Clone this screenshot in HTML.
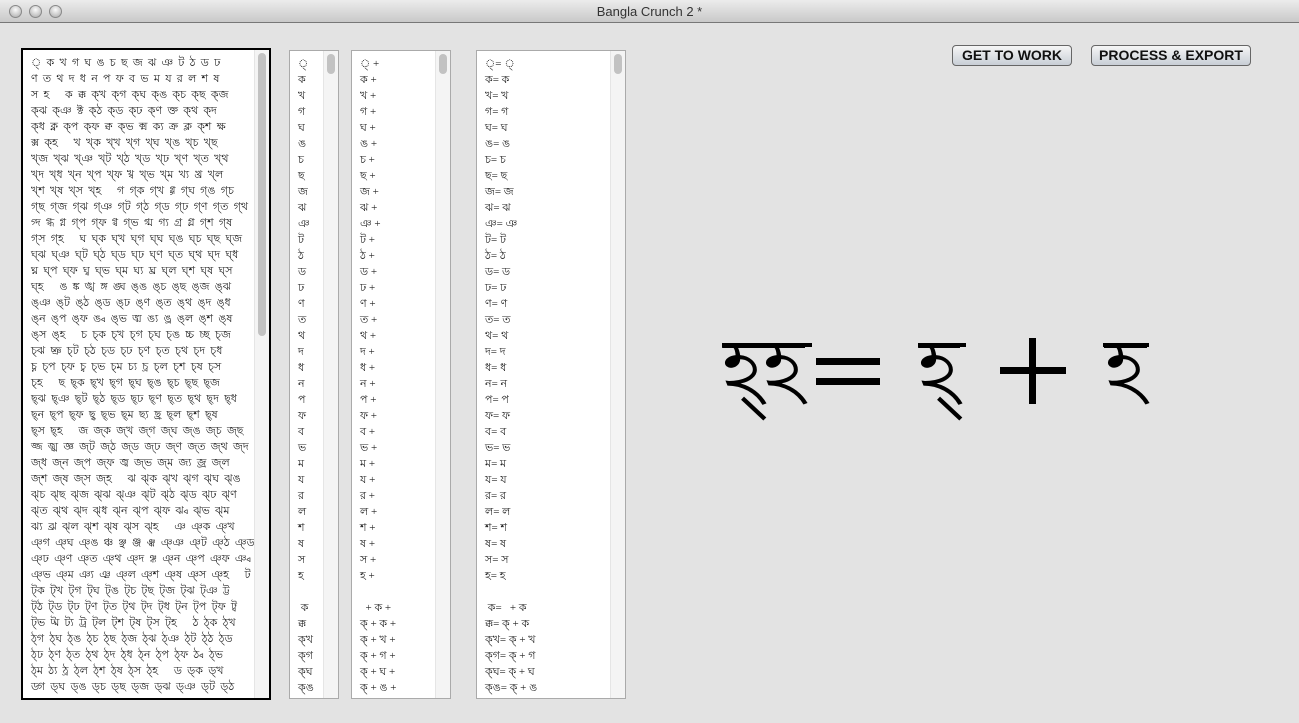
<!DOCTYPE html>
<html><head><meta charset="utf-8"><style>
*{margin:0;padding:0;box-sizing:border-box}
body{width:1299px;height:723px;background:#e3e3e3;font-family:"Liberation Sans","Noto Sans CJK SC",sans-serif;overflow:hidden;position:relative}
.tb{position:absolute;left:0;top:0;width:1299px;height:23px;background:linear-gradient(#ececec,#c9c9c9);border-bottom:1px solid #777;text-align:center;font-size:13px;line-height:23px;color:#333}
.dot{position:absolute;top:5px;width:13px;height:13px;border-radius:50%;background:radial-gradient(circle at 50% 35%,#fafafa,#a8a8a8);border:1px solid #888}
.p{position:absolute;top:50px;height:649px;background:#fff;border:1px solid #aaa;overflow:hidden;font-size:11px;line-height:16px;color:#222;padding:5px 0 0 8px;white-space:pre;font-family:"Liberation Serif","Noto Sans CJK SC",serif}
.p1{word-spacing:2.5px}
.sb{position:absolute;top:0;right:0;width:15px;height:100%;background:#f4f4f4;border-left:1px solid #e5e5e5}
.th{position:absolute;left:3px;top:3px;width:8px;height:20px;border-radius:4px;background:#c2c2c2}
.btn{position:absolute;top:45px;height:21px;border:1px solid #666;border-radius:4px;background:linear-gradient(#f6f6f6,#c8ced6);font-weight:bold;font-size:14px;line-height:19px;text-align:center;color:#111}
.b{position:absolute;top:318px;font-size:78px;line-height:100px;white-space:nowrap;font-family:"Liberation Sans","Noto Sans CJK SC",sans-serif}
.bar{position:absolute;top:343px;height:4px;background:#000}
.sym{position:absolute;background:#000}
</style></head><body>
<div class="tb">Bangla Crunch 2 *
<div class="dot" style="left:9px"></div><div class="dot" style="left:29px"></div><div class="dot" style="left:49px"></div></div>

<div class="p p1" style="left:21px;top:48px;width:250px;height:652px;border:2px solid #000">্ ক খ গ ঘ ঙ চ ছ জ ঝ ঞ ট ঠ ড ঢ
ণ ত থ দ ধ ন প ফ ব ভ ম য র ল শ ষ
স হ   ক ক্ক ক্খ ক্গ ক্ঘ ক্ঙ ক্চ ক্ছ ক্জ
ক্ঝ ক্ঞ ক্ট ক্ঠ ক্ড ক্ঢ ক্ণ ক্ত ক্থ ক্দ
ক্ধ ক্ন ক্প ক্ফ ক্ব ক্ভ ক্ম ক্য ক্র ক্ল ক্শ ক্ষ
ক্স ক্হ   খ খ্ক খ্খ খ্গ খ্ঘ খ্ঙ খ্চ খ্ছ
খ্জ খ্ঝ খ্ঞ খ্ট খ্ঠ খ্ড খ্ঢ খ্ণ খ্ত খ্থ
খ্দ খ্ধ খ্ন খ্প খ্ফ খ্ব খ্ভ খ্ম খ্য খ্র খ্ল
খ্শ খ্ষ খ্স খ্হ   গ গ্ক গ্খ গ্গ গ্ঘ গ্ঙ গ্চ
গ্ছ গ্জ গ্ঝ গ্ঞ গ্ট গ্ঠ গ্ড গ্ঢ গ্ণ গ্ত গ্থ
গ্দ গ্ধ গ্ন গ্প গ্ফ গ্ব গ্ভ গ্ম গ্য গ্র গ্ল গ্শ গ্ষ
গ্স গ্হ   ঘ ঘ্ক ঘ্খ ঘ্গ ঘ্ঘ ঘ্ঙ ঘ্চ ঘ্ছ ঘ্জ
ঘ্ঝ ঘ্ঞ ঘ্ট ঘ্ঠ ঘ্ড ঘ্ঢ ঘ্ণ ঘ্ত ঘ্থ ঘ্দ ঘ্ধ
ঘ্ন ঘ্প ঘ্ফ ঘ্ব ঘ্ভ ঘ্ম ঘ্য ঘ্র ঘ্ল ঘ্শ ঘ্ষ ঘ্স
ঘ্হ   ঙ ঙ্ক ঙ্খ ঙ্গ ঙ্ঘ ঙ্ঙ ঙ্চ ঙ্ছ ঙ্জ ঙ্ঝ
ঙ্ঞ ঙ্ট ঙ্ঠ ঙ্ড ঙ্ঢ ঙ্ণ ঙ্ত ঙ্থ ঙ্দ ঙ্ধ
ঙ্ন ঙ্প ঙ্ফ ঙ্ব ঙ্ভ ঙ্ম ঙ্য ঙ্র ঙ্ল ঙ্শ ঙ্ষ
ঙ্স ঙ্হ   চ চ্ক চ্খ চ্গ চ্ঘ চ্ঙ চ্চ চ্ছ চ্জ
চ্ঝ চ্ঞ চ্ট চ্ঠ চ্ড চ্ঢ চ্ণ চ্ত চ্থ চ্দ চ্ধ
চ্ন চ্প চ্ফ চ্ব চ্ভ চ্ম চ্য চ্র চ্ল চ্শ চ্ষ চ্স
চ্হ   ছ ছ্ক ছ্খ ছ্গ ছ্ঘ ছ্ঙ ছ্চ ছ্ছ ছ্জ
ছ্ঝ ছ্ঞ ছ্ট ছ্ঠ ছ্ড ছ্ঢ ছ্ণ ছ্ত ছ্থ ছ্দ ছ্ধ
ছ্ন ছ্প ছ্ফ ছ্ব ছ্ভ ছ্ম ছ্য ছ্র ছ্ল ছ্শ ছ্ষ
ছ্স ছ্হ   জ জ্ক জ্খ জ্গ জ্ঘ জ্ঙ জ্চ জ্ছ
জ্জ জ্ঝ জ্ঞ জ্ট জ্ঠ জ্ড জ্ঢ জ্ণ জ্ত জ্থ জ্দ
জ্ধ জ্ন জ্প জ্ফ জ্ব জ্ভ জ্ম জ্য জ্র জ্ল
জ্শ জ্ষ জ্স জ্হ   ঝ ঝ্ক ঝ্খ ঝ্গ ঝ্ঘ ঝ্ঙ
ঝ্চ ঝ্ছ ঝ্জ ঝ্ঝ ঝ্ঞ ঝ্ট ঝ্ঠ ঝ্ড ঝ্ঢ ঝ্ণ
ঝ্ত ঝ্থ ঝ্দ ঝ্ধ ঝ্ন ঝ্প ঝ্ফ ঝ্ব ঝ্ভ ঝ্ম
ঝ্য ঝ্র ঝ্ল ঝ্শ ঝ্ষ ঝ্স ঝ্হ   ঞ ঞ্ক ঞ্খ
ঞ্গ ঞ্ঘ ঞ্ঙ ঞ্চ ঞ্ছ ঞ্জ ঞ্ঝ ঞ্ঞ ঞ্ট ঞ্ঠ ঞ্ড
ঞ্ঢ ঞ্ণ ঞ্ত ঞ্থ ঞ্দ ঞ্ধ ঞ্ন ঞ্প ঞ্ফ ঞ্ব
ঞ্ভ ঞ্ম ঞ্য ঞ্র ঞ্ল ঞ্শ ঞ্ষ ঞ্স ঞ্হ   ট
ট্ক ট্খ ট্গ ট্ঘ ট্ঙ ট্চ ট্ছ ট্জ ট্ঝ ট্ঞ ট্ট
ট্ঠ ট্ড ট্ঢ ট্ণ ট্ত ট্থ ট্দ ট্ধ ট্ন ট্প ট্ফ ট্ব
ট্ভ ট্ম ট্য ট্র ট্ল ট্শ ট্ষ ট্স ট্হ   ঠ ঠ্ক ঠ্খ
ঠ্গ ঠ্ঘ ঠ্ঙ ঠ্চ ঠ্ছ ঠ্জ ঠ্ঝ ঠ্ঞ ঠ্ট ঠ্ঠ ঠ্ড
ঠ্ঢ ঠ্ণ ঠ্ত ঠ্থ ঠ্দ ঠ্ধ ঠ্ন ঠ্প ঠ্ফ ঠ্ব ঠ্ভ
ঠ্ম ঠ্য ঠ্র ঠ্ল ঠ্শ ঠ্ষ ঠ্স ঠ্হ   ড ড্ক ড্খ
ড্গ ড্ঘ ড্ঙ ড্চ ড্ছ ড্জ ড্ঝ ড্ঞ ড্ট ড্ঠ
ড্ড ড্ঢ ড্ণ ড্ত ড্থ ড্দ ড্ধ ড্ন ড্প ড্ফ ড্ব
ড্ভ ড্ম ড্য ড্র ড্ল ড্শ ড্ষ ড্স ড্হ   ঢ ঢ্ক
ঢ্খ ঢ্গ ঢ্ঘ ঢ্ঙ ঢ্চ ঢ্ছ ঢ্জ ঢ্ঝ ঢ্ঞ ঢ্ট ঢ্ঠ<div class="sb"><div class="th" style="height:283px"></div></div></div>

<div class="p" style="left:289px;width:50px">্
ক
খ
গ
ঘ
ঙ
চ
ছ
জ
ঝ
ঞ
ট
ঠ
ড
ঢ
ণ
ত
থ
দ
ধ
ন
প
ফ
ব
ভ
ম
য
র
ল
শ
ষ
স
হ

 ক
ক্ক
ক্খ
ক্গ
ক্ঘ
ক্ঙ<div class="sb"><div class="th"></div></div></div>

<div class="p" style="left:351px;width:100px">্ +
ক +
খ +
গ +
ঘ +
ঙ +
চ +
ছ +
জ +
ঝ +
ঞ +
ট +
ঠ +
ড +
ঢ +
ণ +
ত +
থ +
দ +
ধ +
ন +
প +
ফ +
ব +
ভ +
ম +
য +
র +
ল +
শ +
ষ +
স +
হ +

  + ক +
ক্ + ক +
ক্ + খ +
ক্ + গ +
ক্ + ঘ +
ক্ + ঙ +<div class="sb"><div class="th"></div></div></div>

<div class="p" style="left:476px;width:150px">্= ্
ক= ক
খ= খ
গ= গ
ঘ= ঘ
ঙ= ঙ
চ= চ
ছ= ছ
জ= জ
ঝ= ঝ
ঞ= ঞ
ট= ট
ঠ= ঠ
ড= ড
ঢ= ঢ
ণ= ণ
ত= ত
থ= থ
দ= দ
ধ= ধ
ন= ন
প= প
ফ= ফ
ব= ব
ভ= ভ
ম= ম
য= য
র= র
ল= ল
শ= শ
ষ= ষ
স= স
হ= হ

 ক=   + ক
ক্ক= ক্ + ক
ক্খ= ক্ + খ
ক্গ= ক্ + গ
ক্ঘ= ক্ + ঘ
ক্ঙ= ক্ + ঙ<div class="sb"><div class="th"></div></div></div>

<div class="btn" style="left:952px;width:120px">GET TO WORK</div>
<div class="btn" style="left:1091px;width:160px">PROCESS &amp; EXPORT</div>

<div class="b" style="left:722px">হ্হ</div>
<div class="bar" style="left:722px;width:90px"></div>
<div class="sym" style="left:816px;top:358px;width:64px;height:7px"></div>
<div class="sym" style="left:816px;top:378px;width:64px;height:7px"></div>
<div class="b" style="left:918px">হ্</div>
<div class="bar" style="left:918px;width:48px"></div>
<div class="sym" style="left:1000px;top:367px;width:66px;height:7px"></div>
<div class="sym" style="left:1029px;top:338px;width:7px;height:66px"></div>
<div class="b" style="left:1105px">হ</div>
<div class="bar" style="left:1103px;width:46px"></div>
</body></html>
